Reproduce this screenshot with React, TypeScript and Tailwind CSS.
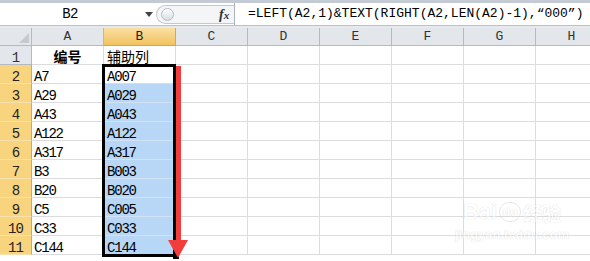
import React from "react";

const cols = ["A", "B", "C", "D", "E", "F", "G", "H"];

const rows: [string, string][] = [
  ["编号", "辅助列"],
  ["A7", "A007"],
  ["A29", "A029"],
  ["A43", "A043"],
  ["A122", "A122"],
  ["A317", "A317"],
  ["B3", "B003"],
  ["B20", "B020"],
  ["C5", "C005"],
  ["C33", "C033"],
  ["C144", "C144"],
];

const mono = "font-['Liberation_Mono','Noto_Sans_CJK_SC',monospace]";

function FormulaBar() {
  return (
    <div className="flex h-[22px] bg-white">
      <div className="relative flex w-[156px] items-center">
        <div className={`w-[140px] text-center text-[14px] tracking-[-0.6px] text-black ${mono}`}>
          B2
        </div>
        <svg className="absolute left-[145px] top-[9px]" width="8" height="5" viewBox="0 0 8 5">
          <polygon points="0,0 8,0 4,5" fill="#444" />
        </svg>
      </div>
      <div className="relative flex w-[78px] items-center">
        <div className="absolute left-0 top-[2px] h-[19px] w-[78px] rounded-l-full border border-r-0 border-[#c3c8cf] bg-[#f4f5f7]" />
        <div className="absolute left-[5px] top-[5px] h-[13px] w-[13px] rounded-full border border-[#b8bec6] bg-gradient-to-b from-[#fdfdfd] to-[#d9dde2]" />
        <span className="absolute left-[63px] top-[1px] font-['Liberation_Serif',serif] text-[14px] font-bold italic text-[#333]">
          f<span className="text-[11px]">x</span>
        </span>
      </div>
      <div className="flex flex-1 items-center border-l border-[#aab2bd] pl-[13px]">
        <span className={`whitespace-nowrap text-[13px] text-black ${mono}`}>
          =LEFT(A2,1)&amp;TEXT(RIGHT(A2,LEN(A2)-1),“000”)
        </span>
      </div>
    </div>
  );
}

function HeaderRow() {
  return (
    <div className="flex h-[18px]">
      <div className="relative w-[32px] shrink-0 border-r border-b border-[#b4bac2] bg-[#e3e7ec]">
        <svg className="absolute right-[2px] bottom-[2px]" width="10" height="10" viewBox="0 0 10 10">
          <polygon points="10,0 10,10 0,10" fill="#c5cad1" />
        </svg>
      </div>
      {cols.map((c) => (
        <div
          key={c}
          className={`flex w-[72px] shrink-0 items-center justify-center border-r border-b text-[13px] ${mono} ${
            c === "B"
              ? "border-[#d8a848] bg-gradient-to-b from-[#fbdfa3] to-[#f2c25c] text-[#222]"
              : "border-[#b4bac2] bg-[#e3e7ec] text-[#333]"
          }`}
        >
          {c}
        </div>
      ))}
    </div>
  );
}

function DataRow({ n, a, b }: { n: number; a: string; b: string }) {
  const picked = n >= 2;
  const blue = n >= 3;
  return (
    <div className="flex h-[19px]">
      <div
        className={`flex w-[32px] shrink-0 items-start justify-center border-r border-b pt-[5px] text-[14px] leading-none tracking-[-0.8px] ${mono} ${
          picked
            ? "border-r-[#d8a848] border-b-[#f7e2ad] bg-[#f9d47e] text-[#222]"
            : "border-[#b4bac2] bg-[#e3e7ec] text-[#333]"
        }`}
      >
        {n}
      </div>
      <div
        className={`flex w-[72px] shrink-0 items-start border-r border-b border-[#dadcdd] pt-[5px] text-[14px] leading-none text-black ${mono} ${
          n === 1 ? "justify-center font-bold" : "pl-[2px] tracking-[-1.2px]"
        }`}
      >
        {a}
      </div>
      <div
        className={`flex w-[72px] shrink-0 items-start border-r border-b pt-[5px] pl-[3px] text-[14px] leading-none text-black ${mono} ${
          blue ? "border-[#d3e3f4] bg-[#b8d7f6]" : "border-[#dadcdd] bg-white"
        } ${n === 1 ? "" : "tracking-[-1.2px]"}`}
      >
        {b}
      </div>
      {cols.slice(2).map((c) => (
        <div key={c} className="w-[72px] shrink-0 border-r border-b border-[#dadcdd]" />
      ))}
    </div>
  );
}

export default function App() {
  return (
    <div className="h-[261px] w-[590px] overflow-hidden bg-white">
      <div className="h-[3px] bg-[#c4cad3]" />
      <FormulaBar />
      <div className="h-[1px] bg-[#b9c0c9]" />
      <div className="h-[2px] bg-[#e6e9ed]" />
      <div className="relative">
        <HeaderRow />
        {rows.map(([a, b], i) => (
          <DataRow key={i} n={i + 1} a={a} b={b} />
        ))}
        {/* selection box B2:B11 */}
        <div className="absolute left-[102px] top-[36px] h-[193px] w-[74px] border-[3px] border-black" />
        <div className="absolute left-[173px] top-[225px] h-[6px] w-[6px] bg-black" />
        {/* red arrow */}
        <svg className="absolute left-[166px] top-[36px]" width="24" height="196" viewBox="0 0 24 196">
          <rect x="10" y="2" width="5" height="176" fill="#f23d3d" />
          <polygon points="2,176 22,176 12,194" fill="#f23d3d" />
        </svg>
        {/* watermark */}
        <div className="absolute left-[455px] top-[173px] flex flex-col items-center opacity-45">
          <div className="flex items-center gap-[2px] font-['Liberation_Sans',sans-serif] text-[22px] font-bold leading-none text-white [text-shadow:0_0_1px_#bbb,0_0_1px_#bbb]">
            <span>Bai</span>
            <span className="flex h-[20px] w-[22px] items-center justify-center rounded-full border border-[#ccc] text-[12px]">
              du
            </span>
            <span className="font-['Noto_Sans_CJK_SC',sans-serif] text-[19px]">经验</span>
          </div>
          <div className="mt-[2px] font-['Liberation_Sans',sans-serif] text-[13px] font-bold text-white [text-shadow:0_0_1px_#bbb,0_0_1px_#bbb]">
            jingyan.baidu.com
          </div>
        </div>
      </div>
    </div>
  );
}
